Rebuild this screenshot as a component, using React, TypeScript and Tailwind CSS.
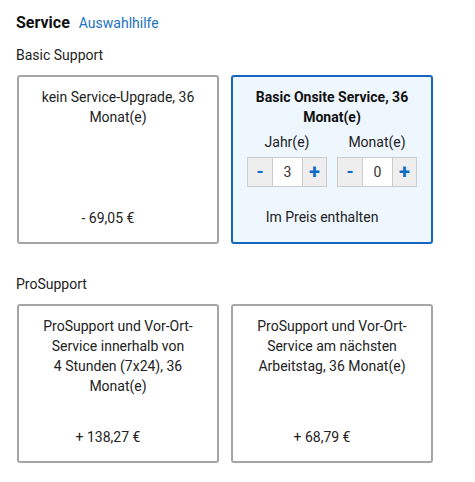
import React from "react";

const Stepper = ({ label, value }: { label: string; value: number }) => {
  return (
    <div className="flex flex-col items-center">
      <div className="text-[14px] leading-5 text-[#222]">{label}</div>
      <div className="mt-[5px] flex h-[30px] border border-[#cccccc]">
        <button className="flex w-[24px] items-center justify-center bg-[#eeeeee] text-[18px] font-bold leading-none text-[#0b6bc5]">
          -
        </button>
        <div className="flex w-[31px] items-center justify-center border-x border-[#cccccc] bg-white text-[14px] text-[#333]">
          {value}
        </div>
        <button className="flex w-[23px] items-center justify-center bg-[#eeeeee] text-[20px] font-bold leading-none text-[#0b6bc5]">
          +
        </button>
      </div>
    </div>
  );
};

const OptionCard = ({ title, price, h }: { title: React.ReactNode; price: string; h: string }) => {
  return (
    <div
      className={`flex flex-col items-center rounded-[3px] border-2 border-[#a5a5a5] bg-white px-4 pt-[10px] pb-[14px] text-center text-[14px] leading-5 text-[#222] ${h}`}
    >
      <div>{title}</div>
      <div className="mt-auto pr-5">{price}</div>
    </div>
  );
};

export default function App() {
  return (
    <div className="min-h-[482px] bg-white pl-4 pt-[11px]" style={{ fontFamily: "Roboto, 'Liberation Sans', sans-serif" }}>
      <div className="flex items-baseline gap-[9px]">
        <span className="text-[16px] font-bold text-[#111]">Service</span>
        <a className="text-[14px] text-[#1a73c4]">Auswahlhilfe</a>
      </div>

      <div className="mt-[10px] text-[14px] leading-5 text-[#222]">Basic Support</div>
      <div className="mt-[10px] grid grid-cols-[202px_202px] gap-x-[12px] pl-px">
        <OptionCard h="h-[169px]" title={<>kein Service-Upgrade, 36 Monat(e)</>} price="- 69,05 €" />
        <div className="flex h-[169px] flex-col items-center rounded-[3px] border-2 border-[#1565c0] bg-[#eef6fe] px-4 pt-[10px] text-center text-[14px] leading-5 text-[#222]">
          <div className="font-bold text-[#111]">Basic Onsite Service, 36 Monat(e)</div>
          <div className="mt-[5px] flex gap-[10px]">
            <Stepper label="Jahr(e)" value={3} />
            <Stepper label="Monat(e)" value={0} />
          </div>
          <div className="mt-[20px] pr-5">Im Preis enthalten</div>
        </div>
      </div>

      <div className="mt-[30px] text-[14px] leading-5 text-[#222]">ProSupport</div>
      <div className="mt-[10px] grid grid-cols-[202px_202px] gap-x-[12px] pl-px">
        <OptionCard
          h="h-[159px]"
          title={<>ProSupport und Vor-Ort-Service innerhalb von 4{"\u00a0"}Stunden (7x24), 36 Monat(e)</>}
          price="+ 138,27 €"
        />
        <OptionCard
          h="h-[159px]"
          title={<>ProSupport und Vor-Ort-Service am nächsten Arbeitstag, 36 Monat(e)</>}
          price="+ 68,79 €"
        />
      </div>
    </div>
  );
}
